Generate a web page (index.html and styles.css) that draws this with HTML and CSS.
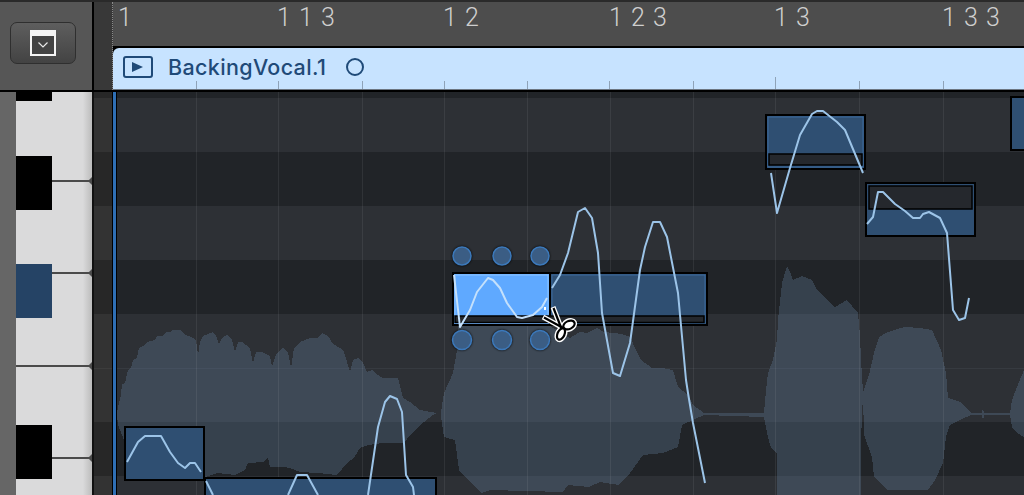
FILE: index.html
```html
<!DOCTYPE html>
<html lang="en">
<head>
    <meta charset="UTF-8">
    <title>Flex Pitch</title>
    <link rel="stylesheet" href="styles.css">
</head>
<body>
    <header class="top">
        <div class="corner">
            <button class="menu-btn">
                <span class="menu-icon">
                    <svg width="10" height="6" viewBox="0 0 10 6"><path d="M0.5 0.5 L5 5 L9.5 0.5" fill="none" stroke="#e8e8e8" stroke-width="1.2"/></svg>
                </span>
            </button>
        </div>
        <div class="gutter-top"></div>
        <div class="timeline">
            <div class="ruler">
                <span>1</span>
                <span>1 1 3</span>
                <span>1 2</span>
                <span>1 2 3</span>
                <span>1 3</span>
                <span>1 3 3</span>
            </div>
            <div class="region">
                <svg class="play-icon" width="30" height="22" viewBox="0 0 30 22">
                    <rect x="1" y="1" width="28" height="20" rx="2" fill="none" stroke="#1f4a78" stroke-width="2"/>
                    <path d="M9 6 L20 11 L9 16 Z" fill="#1f4a78"/>
                </svg>
                <span class="region-name">BackingVocal.1</span>
                <span class="region-dot"></span>
                <i class="tick tick1"></i><i class="tick tick2"></i><i class="tick tick3"></i>
                <i class="tick tick4"></i><i class="tick tick5"></i><i class="tick tick6"></i>
                <i class="tick tick7"></i><i class="tick tick8 tall"></i><i class="tick tick9"></i>
                <i class="tick tick10"></i>
            </div>
        </div>
    </header>

    <main class="bottom">
        <div class="piano">
            <div class="white-keys">
                <i class="black-key bk1"></i>
                <i class="black-key bk2"></i>
                <i class="black-key bk3 active"></i>
                <i class="black-key bk4"></i>
                <i class="key-line kl1"></i>
                <i class="key-line kl2"></i>
                <i class="key-line kl3"></i>
                <i class="key-line kl4"></i>
            </div>
        </div>

        <div class="lanes gutter">
            <div class="lane dark first"></div>
            <div class="lane"></div>
            <div class="lane dark"></div>
            <div class="lane"></div>
            <div class="lane dark"></div>
            <div class="lane"></div>
            <div class="lane split"></div>
            <div class="lane dark"></div>
            <div class="lane"></div>
        </div>

        <div class="editor">
            <div class="lanes">
                <div class="lane dark first"></div>
                <div class="lane"></div>
                <div class="lane dark"></div>
                <div class="lane"></div>
                <div class="lane dark"></div>
                <div class="lane"></div>
                <div class="lane split"></div>
                <div class="lane dark"></div>
                <div class="lane"></div>
            </div>

            <svg class="canvas" width="907" height="403" viewBox="117 92 907 403">
                <!-- waveform -->
                <path class="wave" d="M117 414 L118 407 L121 395 L122 384 L125 383 L128 370 L131 368 L133 360 L137 358 L139 348 L143 346 L147 342 L155 340 L157 336 L163 336 L166 332 L170 332 L172 330 L181 330 L184 334 L193 338 L196 340 L198 355 L200 342 L203 336 L208 334 L213 332 L216 336 L219 344 L222 338 L227 335 L232 340 L235 352 L238 342 L242 342 L250 348 L253 363 L256 352 L262 352 L270 356 L272 367 L276 354 L283 348 L288 352 L291 368 L294 348 L300 342 L310 338 L318 338 L322 333 L328 336 L333 344 L340 348 L344 352 L350 372 L353 360 L358 358 L363 363 L367 372 L372 370 L376 374 L383 378 L398 378 L403 398 L410 402 L420 410 L437 413 L433 415 L424 422 L410 435 L404 443 L383 443 L368 445 L360 448 L354 458 L347 463 L337 475 L318 473 L300 472 L290 468 L283 467 L270 467 L268 457 L264 462 L248 463 L245 470 L235 475 L218 473 L205 477 L130 480 L124 440 L118 425 Z"/>
                <path class="wave" d="M441 412 L444 393 L453 373 L457 350 L458 326 L550 326 L570 338 L580 332 L587 333 L597 328 L604 332 L613 333 L622 334 L630 337 L636 350 L641 360 L652 368 L662 368 L673 370 L678 387 L688 395 L693 405 L704 413 L764 413 L766 390 L768 373 L773 360 L777 340 L778 320 L782 283 L787 266 L790 272 L793 280 L802 276 L812 280 L817 290 L825 298 L835 307 L847 300 L858 313 L860 335 L861 360 L863 392 L869 375 L874 353 L879 337 L886 333 L894 330 L905 327 L920 328 L932 330 L941 350 L946 373 L948 398 L960 402 L971 413 L982 413 L983 408 L984 413 L1010 413 L1012 400 L1017 387 L1024 370 L1024 437 L1017 433 L1012 427 L1010 415 L984 415 L983 421 L982 415 L971 415 L960 420 L950 425 L946 437 L943 463 L935 480 L928 490 L887 490 L874 477 L872 457 L864 435 L863 393 L861 440 L861 495 L777 495 L777 453 L771 448 L768 437 L764 417 L704 415 L682 425 L678 447 L663 453 L643 455 L630 473 L619 485 L600 482 L589 487 L568 485 L563 492 L490 490 L481 493 L459 470 L455 440 L444 437 L441 416 Z"/>

                <!-- bar and beat lines -->
                <g class="grid">
                    <path d="M196.5 92V495M278.5 92V495M362.5 92V495M444.5 92V495M527.5 92V495M610.5 92V495M693.5 92V495M775.5 92V495M859.5 92V495M943.5 92V495"/>
                </g>

                <!-- notes -->
                <rect class="note" x="125" y="427" width="79" height="53"/>
                <rect class="note" x="205" y="478" width="231" height="40"/>
                <rect class="note" x="766" y="115" width="99" height="54"/>
                <rect class="note-inner" x="768" y="117" width="95" height="50"/>
                <rect class="track" x="769" y="154" width="93" height="11"/>
                <rect class="note" x="866" y="183" width="109" height="53"/>
                <rect class="track" x="869" y="186" width="103" height="23"/>
                <rect class="note" x="1011" y="97" width="30" height="53"/>

                <!-- split note -->
                <rect class="note" x="550" y="273" width="157" height="52"/>
                <rect class="note-inner" x="552" y="275" width="153" height="48"/>
                <rect class="note selected" x="453" y="273" width="97" height="52"/>
                <rect class="note-inner light" x="455" y="275" width="93" height="48"/>
                <rect class="track" x="455" y="316" width="249" height="6.5"/>

                <!-- handles -->
                <g class="handle">
                    <circle cx="462" cy="256" r="9"/>
                    <circle cx="502" cy="256" r="9"/>
                    <circle cx="540" cy="256" r="9"/>
                    <circle cx="462" cy="340" r="9.5"/>
                    <circle cx="502" cy="340" r="9.5"/>
                    <circle cx="540" cy="340" r="9.5"/>
                </g>

                <!-- pitch curves -->
                <g class="pitch">
                    <path d="M127 462 L138 442 L145 436 L161 436 L170 452 L178 463 L185 468 L190 463 L195 463 L201 472"/>
                    <path d="M206 481 L213 495"/>
                    <path d="M288 495 L297 475 L307 475 L318 495"/>
                    <path d="M368 495 L378 427 L385 402 L390 396 L397 399 L402 412 L406 475 L413 487 L414 495"/>
                    <path d="M552 288 L560 275 L568 253 L578 212 L585 208 L592 218 L598 253 L602 313 L613 373 L620 376 L630 343 L640 270 L645 247 L653 222 L660 222 L667 237 L678 293 L686 380 L688 393 L693 423 L705 483"/>
                    <path d="M771 173 L777 213 L790 168 L800 135 L812 114 L817 111 L823 111 L837 122 L845 130 L863 173"/>
                    <path d="M867 224 L873 217 L878 192 L883 192 L895 204 L905 211 L913 218 L920 218 L923 214 L929 212 L940 218 L947 233 L953 310 L959 320 L965 318 L969 298"/>
                    <path class="pitch-light" d="M454 275 L460 327 L470 310 L477 292 L488 278 L493 280 L500 288 L507 303 L517 317 L522 318 L533 315 L542 307 L547 298"/>
                </g>

                <!-- scissors cursor -->
                <g class="scissors-out">
                    <path d="M543 317 L565 329"/>
                    <path d="M553 307 L562 330"/>
                    <ellipse cx="569" cy="325" rx="6" ry="4" transform="rotate(-25 569 325)"/>
                    <ellipse cx="561" cy="334" rx="3.5" ry="6" transform="rotate(25 561 334)"/>
                </g>
                <g class="scissors-in">
                    <path d="M544 317.5 L565 329"/>
                    <path d="M553.5 308 L562 330"/>
                    <ellipse cx="569" cy="325" rx="6" ry="4" transform="rotate(-25 569 325)"/>
                    <ellipse cx="561" cy="334" rx="3.5" ry="6" transform="rotate(25 561 334)"/>
                </g>
                <rect class="hot-spot" x="544" y="307" width="2" height="3"/>
            </svg>

            <i class="start-line"></i>
        </div>
    </main>
</body>
</html>
```

FILE: styles.css
```css
html,body {
	width:100%;
	height:100%;
	margin:0;
	padding:0;
	overflow:hidden;
	background:#000;
	font-family:"Roboto","Liberation Sans",sans-serif;
}

.top {
	display:flex;
	height:92px;
	border-top:2px solid #2a2a2a;
	box-sizing:border-box;
}
.corner {
	width:92px;
	height:88px;
	flex:none;
	box-sizing:border-box;
	padding:20px 0 0 10px;
	background:#565656;
}
.menu-btn {
	display:flex;
	align-items:center;
	justify-content:center;
	width:66px;
	height:42px;
	padding:0;
	border:1px solid #2f2f2f;
	border-radius:7px;
	background:linear-gradient(#5e5e5e,#434343);
}
.menu-icon {
	display:flex;
	align-items:center;
	justify-content:center;
	width:26px;
	height:26px;
	box-sizing:border-box;
	border:2px solid #f4f4f4;
	border-top-width:6px;
	background:#434343;
}
.gutter-top {
	width:19px;
	height:88px;
	flex:none;
	margin-left:2px;
	background:#383838;
	border-right:1px dotted #8a8a8a;
	box-sizing:border-box;
}
.timeline {
	flex:1;
	min-width:0;
}
.ruler {
	display:grid;
	grid-template-columns:159px 166px 166px 165px 168px 1fr;
	height:44px;
	box-sizing:border-box;
	padding:0 0 0 5px;
	background:#4d4d4d;
	color:#cfcfcf;
	font-size:25px;
	font-weight:300;
	letter-spacing:1px;
	line-height:32px;
	white-space:pre;
}
.region {
	position:relative;
	display:flex;
	align-items:center;
	height:42px;
	margin-top:2px;
	padding:0 0 4px 10px;
	box-sizing:border-box;
	background:#c7e3ff;
	border-top-left-radius:6px;
	border-bottom:1px solid #6c7682;
	color:#1f4a78;
}
.play-icon {
	flex:none;
}
.region-name {
	margin-left:15px;
	font-family:"Inter","Liberation Sans",sans-serif;
	font-size:21.5px;
	font-weight:500;
	letter-spacing:.35px;
}
.region-dot {
	width:14px;
	height:14px;
	margin-left:20px;
	border:2px solid #1f4a78;
	border-radius:50%;
}
.tick {
	position:absolute;
	bottom:0;
	width:1px;
	height:8px;
	background:#8fa3b8;
}
.tick.tall { height:12px; }
.tick1 { left:83px; }
.tick2 { left:165px; }
.tick3 { left:249px; }
.tick4 { left:331px; }
.tick5 { left:414px; }
.tick6 { left:496px; }
.tick7 { left:580px; }
.tick8 { left:662px; }
.tick9 { left:746px; }
.tick10 { left:830px; }

.bottom {
	display:flex;
	height:403px;
	overflow:hidden;
}
.piano {
	width:92px;
	flex:none;
	box-sizing:border-box;
	padding-left:16px;
	background:#666;
}
.white-keys {
	position:relative;
	height:100%;
	overflow:hidden;
	background:linear-gradient(90deg,#dadadb 0,#dadadb 88%,#bcbcbc 100%);
}
.black-key {
	position:absolute;
	left:0;
	width:36px;
	height:54px;
	background:#000;
}
.black-key.active { background:#254365; }
.bk1 { top:0; height:9px; }
.bk2 { top:64px; }
.bk3 { top:172px; }
.bk4 { top:333px; }
.key-line {
	position:absolute;
	left:36px;
	right:0;
	height:2px;
	background:#4a4a4a;
}
.key-line::after {
	content:"";
	position:absolute;
	right:0;
	top:-3px;
	border:4px solid transparent;
	border-right-color:#4a4a4a;
	border-left-width:0;
}
.kl1 { top:88px; }
.kl2 { top:180px; }
.kl3 { top:273px; left:0; }
.kl4 { top:365px; }

.lanes {
	display:flex;
	flex-direction:column;
	height:100%;
	overflow:hidden;
}
.lane {
	height:54px;
	flex:none;
	box-sizing:border-box;
	background:#2d3035;
}
.lane:last-child {
	height:auto;
	flex:1;
}
.lane.dark { background:#212428; }
.lane.first { height:6px; }
.lane.split { border-top:1px solid #363a40; }
.gutter {
	width:18px;
	flex:none;
	border-left:2px solid #111;
}
.gutter .lane { background:#333; }
.gutter .lane.dark { background:#272727; }
.gutter .lane.split { border-top-color:#3c3c3c; }

.editor {
	position:relative;
	flex:1;
	min-width:0;
	margin-left:5px;
}
.start-line {
	position:absolute;
	left:-4px;
	top:0;
	bottom:0;
	width:3px;
	background:#2f6fb5;
}
.canvas {
	position:absolute;
	right:0;
	top:0;
	display:block;
}

.wave {
	fill:rgba(97,124,155,.33);
	shape-rendering:crispEdges;
}
.grid path {
	fill:none;
	stroke:rgba(255,255,255,.07);
	stroke-width:1;
}
.note {
	fill:#2f4f72;
	stroke:#000;
	stroke-width:2;
}
.note.selected {
	fill:#5fa9ff;
	stroke:#000;
}
.note-inner {
	fill:none;
	stroke:#3c6a9c;
	stroke-width:1;
}
.note-inner.light { stroke:#8cc4ff; }
.track {
	fill:#25282d;
	stroke:#000;
	stroke-width:1.5;
}
.handle circle {
	fill:#3b5d84;
	stroke:#3c79bb;
	stroke-width:1.5;
	filter:drop-shadow(0 0 1px #000);
}
.pitch path {
	fill:none;
	stroke:#9cc4e8;
	stroke-width:2;
	stroke-linejoin:round;
}
.pitch .pitch-light { stroke:#c4e0fb; }
.scissors-out path,.scissors-out ellipse {
	fill:none;
	stroke:#fff;
	stroke-width:5;
}
.scissors-in path,.scissors-in ellipse {
	fill:none;
	stroke:#000;
	stroke-width:2.2;
}
.scissors-in ellipse { fill:#fff; }
.hot-spot { fill:#fff; }
```
